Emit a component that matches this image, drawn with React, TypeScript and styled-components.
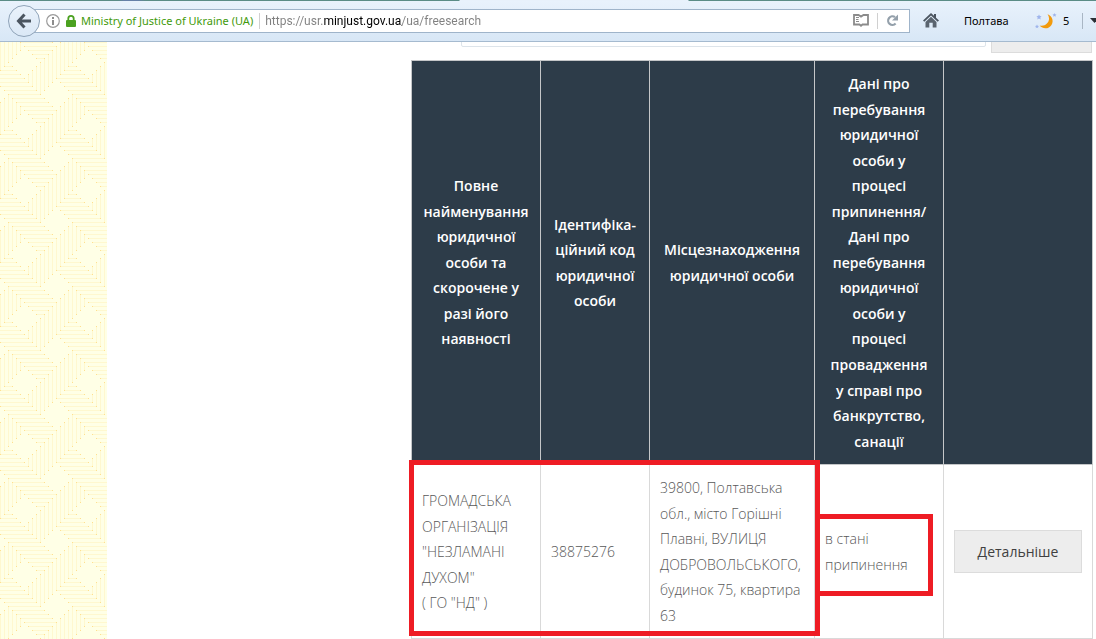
import React from "react";
import styled, { createGlobalStyle } from "styled-components";

const GlobalStyle = createGlobalStyle`
  *, *::before, *::after { box-sizing: border-box; }
  body {
    margin: 0;
    background: #fff;
    overflow: hidden;
    font-family: "Open Sans", "Noto Sans", sans-serif;
  }
`;

const Page = styled.div`
  display: flex;
  flex-direction: column;
  min-height: 100vh;
`;

/* ---------- browser toolbar ---------- */

const Toolbar = styled.header`
  position: relative;
  z-index: 2;
  display: flex;
  align-items: center;
  height: 42px;
  padding-left: 8px;
  overflow: hidden;
  border-bottom: 1px solid #a5bacf;
  background:
    linear-gradient(90deg, #5b8c86 0 118px, #6680a8 124px 138px, #5b8c86 146px 459px, #e8f1fb 460px 688px, #5b8c86 689px) 0 0 / 100% 1px no-repeat,
    linear-gradient(#e9f2fc, #d8e7f6);
  font-family: "Noto Sans", "Open Sans", sans-serif;
  font-size: 11px;
  color: #000;
`;

const IconButton = styled.button`
  display: flex;
  align-items: center;
  justify-content: center;
  flex: none;
  padding: 0;
  border: 0;
  background: none;
`;

const BackButton = styled(IconButton)`
  position: relative;
  width: 32px;
  height: 32px;
  border: 1px solid #8fa3b8;
  border-radius: 50%;
  background: linear-gradient(#eaf2fb, #dbe8f6);
`;

const AddressBar = styled.div`
  display: flex;
  align-items: center;
  flex: 1;
  height: 24px;
  margin-left: -6px;
  padding: 0 10px 0 11px;
  border: 1px solid #9fb4ca;
  background: #fff;
`;

const Owner = styled.span`
  display: flex;
  align-items: center;
  gap: 5px;
  margin: 0 6px 0 6px;
  color: #3f9a0a;
  white-space: nowrap;
`;

const Divider = styled.span<{ $color?: string }>`
  flex: none;
  width: 1px;
  height: 16px;
  background: ${(p) => p.$color ?? "#d0d0d0"};
`;

const UrlInput = styled.input`
  flex: 1;
  min-width: 0;
  padding: 0 0 0 5px;
  border: 0;
  outline: 0;
  background: linear-gradient(90deg, #808080 0 63px, #000 63px 142px, #808080 142px);
  background-clip: text;
  -webkit-background-clip: text;
  color: transparent;
  font-family: Roboto, sans-serif;
  font-size: 12px;
`;

const BarActions = styled.div`
  display: flex;
  align-items: center;
  gap: 8px;
`;

const ToolbarExtras = styled.div`
  display: flex;
  align-items: center;
  flex: none;
  width: 186px;
  padding-left: 13px;

  > * { flex: none; }
`;

const City = styled.span`
  width: 71px;
  margin-left: 25px;
`;

const Degrees = styled.span`
  width: 19px;
  margin-left: 6px;
`;

const MoreButton = styled(IconButton)`
  margin-left: 7px;
`;

/* ---------- page ---------- */

const Body = styled.div`
  display: flex;
  flex: 1;
`;

const Side = styled.aside`
  flex: none;
  width: 107px;
  background: #ffffe6;

  svg { display: block; }
`;

const Main = styled.main`
  flex: 1;
  min-width: 0;
  padding: 0 4px 0 304px;
`;

const SearchForm = styled.form`
  display: flex;
  align-items: flex-end;
  gap: 5px;
  height: 18px;
  padding-left: 50px;
  overflow: hidden;
`;

const SearchInput = styled.input`
  flex: 1;
  min-width: 0;
  height: 40px;
  margin-bottom: 13px;
  border: 1px solid #dde4ea;
  border-radius: 2px;
`;

const SearchButton = styled.button`
  flex: none;
  width: 101px;
  height: 40px;
  margin-bottom: 7px;
  border: 1px solid #dcdcdc;
  background: #ededed;
`;

const TableWrap = styled.div`
  position: relative;
`;

const Table = styled.table`
  width: 100%;
  table-layout: fixed;
  border-collapse: collapse;
  font-size: 14px;
  line-height: 1.825;
`;

const HeadCell = styled.th`
  padding: 10px;
  border: 1px solid #c4c6c8;
  background: #2d3c49;
  color: #fff;
  font-weight: 600;
  text-align: center;
  vertical-align: middle;
  white-space: pre-line;
`;

const Cell = styled.td`
  padding: 10px;
  border: 1px solid #d9d9d9;
  color: #585858;
  font-weight: 300;
  vertical-align: middle;
  white-space: pre-line;
`;

const DetailsButton = styled.button`
  display: block;
  width: 100%;
  height: 43px;
  padding: 0;
  border: 1px solid #dcdcdc;
  background: #ededed;
  color: #404040;
  font: inherit;
  font-weight: 400;
`;

const Highlight = styled.div<{ $left: number; $top: number; $width: number; $height: number }>`
  position: absolute;
  left: ${(p) => p.$left}px;
  top: ${(p) => p.$top}px;
  width: ${(p) => p.$width}px;
  height: ${(p) => p.$height}px;
  border: 5px solid #ee1c24;
  pointer-events: none;
`;

/* Background weave: lines on a 4px grid, repeating every 16 steps. */
const ROWS = [
  [5, 13], [6, 14], [7, 13], [8, 12], [9, 11], null, [1, 3], [0, 4],
  [15, 21], [14, 22], [15, 23], [0, 8], [1, 9], [2, 10], [3, 11], [4, 12],
];
const COLUMNS = [
  [15, 23], [14, 22], [13, 21], [14, 20], [15, 19], [0, 2], null, [8, 10],
  [7, 11], [6, 12], [5, 13], [4, 12], [3, 11], [2, 10], [1, 9], [0, 8],
];

function Weave() {
  const lines: React.ReactNode[] = [];
  const dots: React.ReactNode[] = [];
  const add = (span: number[] | null, i: number, horizontal: boolean) => {
    if (!span) return;
    const at = i * 4;
    for (const shift of [0, -64]) {
      const from = span[0] * 4 + shift;
      const size = (span[1] - span[0]) * 4 + 1;
      const end = from + size - 1;
      const key = `${horizontal}-${i}-${shift}`;
      lines.push(
        <rect key={key} x={horizontal ? from : at} y={horizontal ? at : from}
          width={horizontal ? size : 1} height={horizontal ? 1 : size} />
      );
      [from, end].forEach((p, n) =>
        dots.push(<rect key={`${key}-${n}`} x={horizontal ? p : at} y={horizontal ? at : p} width="1" height="1" />)
      );
    }
  };
  ROWS.forEach((s, i) => add(s, i, true));
  COLUMNS.forEach((s, i) => add(s, i, false));
  return (
    <svg width="100%" height="100%" aria-hidden="true" shapeRendering="crispEdges">
      <defs>
        <pattern id="weave" width="64" height="64" patternUnits="userSpaceOnUse">
          <g fill="#fff8cf">{lines}</g>
          <g fill="#ffe08f">{dots}</g>
        </pattern>
      </defs>
      <rect width="100%" height="100%" fill="url(#weave)" />
    </svg>
  );
}

const BackIcon = () => (
  <svg width="16" height="16" viewBox="0 0 16 16" fill="none" stroke="#4b5560" strokeWidth="3">
    <path d="M8.5 1.5 2.5 8l6 6.5M3 8h12" />
  </svg>
);

const InfoIcon = () => (
  <svg width="14" height="14" viewBox="0 0 14 14">
    <circle cx="7" cy="7" r="6.3" fill="#fff" stroke="#9a9a9a" strokeWidth="1.2" />
    <path d="M6 3h2v2H6zM6 6h2v5H6z" fill="#8c8c8c" />
  </svg>
);

const LockIcon = () => (
  <svg width="10" height="12" viewBox="0 0 10 12">
    <path d="M2.3 6V3.6a2.7 2.7 0 0 1 5.4 0V6" fill="none" stroke="#4ba120" strokeWidth="1.8" />
    <rect y="5" width="10" height="7" rx="1" fill="#4ba120" />
  </svg>
);

const ReaderIcon = () => (
  <svg width="16" height="13" viewBox="0 0 16 13" fill="none" stroke="#8b8b8b">
    <path strokeWidth="1.8" d="M8 11.800 6.500 10.500H1V1h4.500L8 2.600 10.500 1H15v9.500H9.500Z" />
    <path d="M3 3.500h3M3 5.500h2.500M3 7.500h3" />
  </svg>
);

const ReloadIcon = () => (
  <svg width="13" height="13" viewBox="0 0 13 13">
    <path d="M9.600 9.600A4.300 4.300 0 1 1 9 3.200" fill="none" stroke="#94a0ab" strokeWidth="2.200" />
    <path d="M12 .5V6.500H6Z" fill="#94a0ab" />
  </svg>
);

const HomeIcon = () => (
  <svg width="16" height="15" viewBox="0 0 16 15">
    <path d="M8 0 0 7.600l1.300 1.200L8 2.600l6.700 6.200L16 7.600l-3-2.900V1h-2v1.800Z" fill="#4b5560" />
    <path d="M8 3.800 2.500 9v5.500h3.800V9.800h3.400v4.700h3.800V9Z" fill="#5a646f" />
  </svg>
);

const MoonIcon = () => (
  <svg width="22" height="16" viewBox="0 0 22 16">
    <path d="M12.500 1.200a7.200 7.200 0 1 1-7.800 11.300c5 1.500 9.800-2.700 9.300-7.300-.1-1.600-.6-2.900-1.500-4Z" fill="#f29a0c" />
    <g fill="#9fb5ec">
      <path d="m4 1.500.8 1.600 1.800.2-1.300 1.200.4 1.900L4 5.500l-1.700.9.4-1.900-1.300-1.200 1.800-.2Z" />
      <path d="m19.500 0 .6 1.200 1.400.2-1 1 .2 1.400-1.200-.7-1.300.7.3-1.400-1-1 1.400-.2Z" />
      <path d="m2 11.500.6 1.200 1.400.2-1 1 .2 1.400-1.200-.7-1.300.7.300-1.400-1-1 1.400-.2Z" />
    </g>
  </svg>
);

const CaretIcon = () => (
  <svg width="10" height="5" viewBox="0 0 10 5">
    <path d="M0 0h9L4.500 5Z" fill="#2b3036" />
  </svg>
);

const HEADERS = [
  "Повне найменування юридичної особи та скорочене у разі його наявності",
  "Ідентифіка-\nційний код юридичної особи",
  "Місцезнаходження юридичної особи",
  "Дані про перебування юридичної особи у процесі припинення/ Дані про перебування юридичної особи у процесі провадження\nу справі про банкрутство, санації",
  "",
];

const RECORD = [
  'ГРОМАДСЬКА ОРГАНІЗАЦІЯ "НЕЗЛАМАНІ ДУХОМ"\n( ГО "НД" )',
  "38875276",
  "39800, Полтавська обл., місто Горішні Плавні, ВУЛИЦЯ ДОБРОВОЛЬСЬКОГО, будинок 75, квартира 63",
  "в стані припинення",
];

const COLUMN_WIDTHS = [129, 109, 165, 129, 149];

export default function App() {
  return (
    <Page>
      <GlobalStyle />
      <Toolbar>
        <BackButton aria-label="Назад"><BackIcon /></BackButton>
        <AddressBar>
          <InfoIcon />
          <Owner><LockIcon />Ministry of Justice of Ukraine (UA)</Owner>
          <Divider />
          <UrlInput aria-label="Адреса" defaultValue="https://usr.minjust.gov.ua/ua/freesearch" />
          <BarActions>
            <IconButton aria-label="Режим читання"><ReaderIcon /></IconButton>
            <Divider />
            <IconButton aria-label="Оновити"><ReloadIcon /></IconButton>
          </BarActions>
        </AddressBar>
        <ToolbarExtras>
          <IconButton aria-label="Додому"><HomeIcon /></IconButton>
          <City>Полтава</City>
          <MoonIcon />
          <Degrees>5</Degrees>
          <Divider $color="#a9b6c4" />
          <MoreButton aria-label="Більше"><CaretIcon /></MoreButton>
        </ToolbarExtras>
      </Toolbar>
      <Body>
        <Side><Weave /></Side>
        <Main>
          <SearchForm>
            <SearchInput aria-label="Пошук" />
            <SearchButton type="button" aria-label="Шукати" />
          </SearchForm>
          <TableWrap>
            <Table>
              <colgroup>
                {COLUMN_WIDTHS.map((w, i) => <col key={i} width={w} />)}
              </colgroup>
              <thead>
                <tr>{HEADERS.map((h, i) => <HeadCell key={i} scope="col">{h}</HeadCell>)}</tr>
              </thead>
              <tbody>
                <tr>
                  {RECORD.map((c) => <Cell key={c}>{c}</Cell>)}
                  <Cell><DetailsButton>Детальніше</DetailsButton></Cell>
                </tr>
              </tbody>
            </Table>
            <Highlight $left={-2} $top={400} $width={411} $height={176} />
            <Highlight $left={404} $top={454} $width={118} $height={82} />
          </TableWrap>
        </Main>
      </Body>
    </Page>
  );
}
